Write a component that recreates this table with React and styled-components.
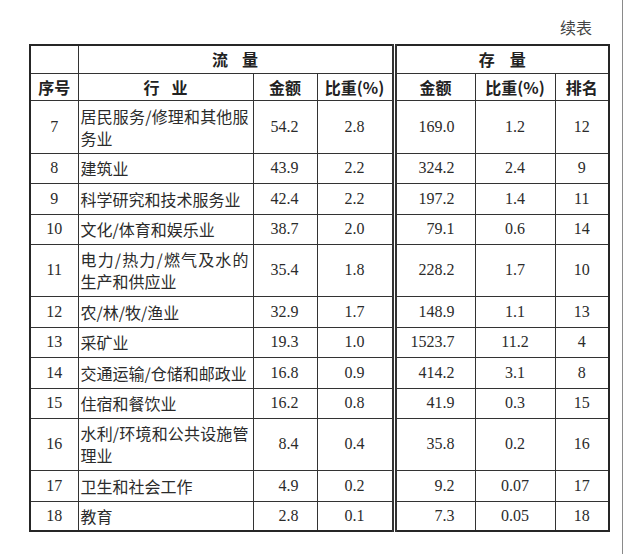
import styled, { createGlobalStyle } from "styled-components";

const GlobalStyle = createGlobalStyle`
  html, body {
    margin: 0;
    padding: 0;
    background: #fff;
  }
  body {
    font-family: "Liberation Serif", "Noto Sans CJK SC", serif;
    color: #2b2b2b;
  }
`;

const Page = styled.div`
  width: 623px;
  height: 554px;
  box-sizing: border-box;
  border-right: 1px solid #8a8a8a;
  padding-left: 29px;
`;

const Sheet = styled.div`
  width: 579px;
`;

const Caption = styled.div`
  height: 44px;
  box-sizing: border-box;
  padding: 18px 16px 0 0;
  text-align: right;
  font-size: 16px;
  line-height: 18px;
  color: #444;
  font-family: "Noto Sans CJK SC", sans-serif;
`;

const Table = styled.table`
  width: 579px;
  table-layout: fixed;
  border-collapse: collapse;
  border: 2px solid #262626;
  font-size: 16px;
`;

const Row = styled.tr`
  height: ${(p) => p.$h}px;
`;

const Head = styled.th`
  padding: 0;
  border: 1px solid #333;
  border-left-style: ${(p) => (p.$double ? "double" : "solid")};
  border-left-width: ${(p) => (p.$double ? "5px" : "1px")};
  font-family: "Noto Sans CJK SC", sans-serif;
  font-weight: 700;
  font-size: 16px;
  line-height: 20px;
  color: #222;
  text-align: center;
  vertical-align: middle;
  white-space: nowrap;
`;

const Spaced = styled.span`
  letter-spacing: ${(p) => p.$gap}px;
  padding-left: ${(p) => p.$gap}px;
`;

const Cell = styled.td`
  padding: 0 ${(p) => p.$pr || 0}px 0 0;
  border: 1px solid #333;
  border-left-style: ${(p) => (p.$double ? "double" : "solid")};
  border-left-width: ${(p) => (p.$double ? "5px" : "1px")};
  text-align: ${(p) => p.$align || "center"};
  vertical-align: middle;
  line-height: 20px;
  color: #2b2b2b;
  white-space: nowrap;
`;

const NameCell = styled.td`
  padding: 0 4px 0 2px;
  border: 1px solid #333;
  vertical-align: middle;
  font-family: "Noto Sans CJK SC", sans-serif;
  font-size: 16px;
  line-height: 22px;
  color: #2b2b2b;
  white-space: nowrap;
`;

const Line = styled.div`
  text-align: ${(p) => (p.$justify ? "justify" : "left")};
  text-align-last: ${(p) => (p.$justify ? "justify" : "auto")};
`;

const rows = [
  { no: 7, name: ["居民服务/修理和其他服", "务业"], fa: "54.2", fr: "2.8", sa: "169.0", sr: "1.2", rank: 12, h: 53 },
  { no: 8, name: ["建筑业"], fa: "43.9", fr: "2.2", sa: "324.2", sr: "2.4", rank: 9, h: 30 },
  { no: 9, name: ["科学研究和技术服务业"], fa: "42.4", fr: "2.2", sa: "197.2", sr: "1.4", rank: 11, h: 31 },
  { no: 10, name: ["文化/体育和娱乐业"], fa: "38.7", fr: "2.0", sa: "79.1", sr: "0.6", rank: 14, h: 30 },
  { no: 11, name: ["电力/热力/燃气及水的", "生产和供应业"], fa: "35.4", fr: "1.8", sa: "228.2", sr: "1.7", rank: 10, h: 52 },
  { no: 12, name: ["农/林/牧/渔业"], fa: "32.9", fr: "1.7", sa: "148.9", sr: "1.1", rank: 13, h: 31 },
  { no: 13, name: ["采矿业"], fa: "19.3", fr: "1.0", sa: "1523.7", sr: "11.2", rank: 4, h: 30 },
  { no: 14, name: ["交通运输/仓储和邮政业"], fa: "16.8", fr: "0.9", sa: "414.2", sr: "3.1", rank: 8, h: 31 },
  { no: 15, name: ["住宿和餐饮业"], fa: "16.2", fr: "0.8", sa: "41.9", sr: "0.3", rank: 15, h: 30 },
  { no: 16, name: ["水利/环境和公共设施管", "理业"], fa: "8.4", fr: "0.4", sa: "35.8", sr: "0.2", rank: 16, h: 52 },
  { no: 17, name: ["卫生和社会工作"], fa: "4.9", fr: "0.2", sa: "9.2", sr: "0.07", rank: 17, h: 31 },
  { no: 18, name: ["教育"], fa: "2.8", fr: "0.1", sa: "7.3", sr: "0.05", rank: 18, h: 30 },
];

export default function App() {
  return (
    <Page>
      <GlobalStyle />
      <Sheet>
        <Caption>续表</Caption>
        <Table>
          <colgroup>
            <col style={{ width: 48 }} />
            <col style={{ width: 175 }} />
            <col style={{ width: 64 }} />
            <col style={{ width: 77 }} />
            <col style={{ width: 81 }} />
            <col style={{ width: 80 }} />
            <col style={{ width: 54 }} />
          </colgroup>
          <thead>
            <Row $h={28}>
              <Head />
              <Head colSpan={3}>
                <Spaced $gap={14}>流量</Spaced>
              </Head>
              <Head colSpan={3} $double>
                <Spaced $gap={15}>存量</Spaced>
              </Head>
            </Row>
            <Row $h={27}>
              <Head>序号</Head>
              <Head>
                <Spaced $gap={12}>行业</Spaced>
              </Head>
              <Head>金额</Head>
              <Head>比重(%)</Head>
              <Head $double>金额</Head>
              <Head>比重(%)</Head>
              <Head>排名</Head>
            </Row>
          </thead>
          <tbody>
            {rows.map((r) => (
              <Row key={r.no} $h={r.h}>
                <Cell>{r.no}</Cell>
                <NameCell>
                  {r.name.map((line, i) => (
                    <Line key={i} $justify={r.name.length > 1 && i === 0}>
                      {line}
                    </Line>
                  ))}
                </NameCell>
                <Cell $align="right" $pr={18}>{r.fa}</Cell>
                <Cell>{r.fr}</Cell>
                <Cell $double $align="right" $pr={20}>{r.sa}</Cell>
                <Cell>{r.sr}</Cell>
                <Cell>{r.rank}</Cell>
              </Row>
            ))}
          </tbody>
        </Table>
      </Sheet>
    </Page>
  );
}
